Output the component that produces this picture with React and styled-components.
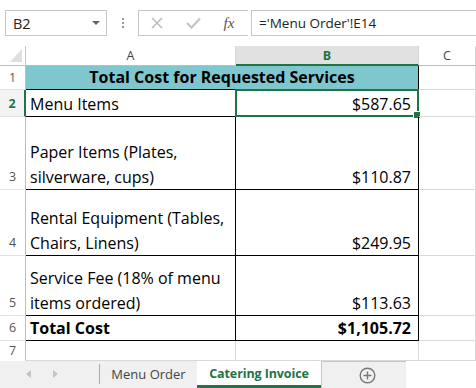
import React from "react";
import styled, { createGlobalStyle, css } from "styled-components";

const GREEN = "#217346";
const GRID = "#d9d9d9";
const FONT = `"Open Sans", "Liberation Sans", sans-serif`;

const GlobalStyle = createGlobalStyle`
  html, body { margin: 0; padding: 0; background: #fff; }
  body { font-family: ${FONT}; width: 476px; height: 388px; overflow: hidden; }
  * { box-sizing: border-box; }
`;

const Page = styled.div`
  width: 476px;
  height: 388px;
  display: flex;
  flex-direction: column;
  overflow: hidden;
`;

/* ---------- formula bar ---------- */
const FormulaBar = styled.div`
  height: 46px;
  display: flex;
  align-items: flex-start;
  padding: 10px 0 0 5px;
`;
const NameBox = styled.div`
  width: 102px;
  height: 26px;
  border: 1px solid #c6c6c6;
  display: flex;
  align-items: center;
  justify-content: space-between;
  padding: 0 6px 0 7px;
  font-size: 14.5px;
  color: #222;
`;
const Caret = styled.span`
  width: 0;
  height: 0;
  border-left: 4px solid transparent;
  border-right: 4px solid transparent;
  border-top: 4px solid #666;
`;
const Dots = styled.div`
  width: 31px;
  height: 26px;
  display: flex;
  flex-direction: column;
  align-items: center;
  justify-content: center;
  gap: 2px;
  & > span { width: 2px; height: 2px; background: #9a9a9a; }
`;
const FxBox = styled.div`
  height: 26px;
  width: 110px;
  border: 1px solid #c6c6c6;
  border-right: none;
  display: flex;
  align-items: center;
`;
const FxIcon = styled.div`
  width: ${(p) => p.$w}px;
  display: flex;
  justify-content: center;
  align-items: center;
  color: #777;
`;
const FxText = styled.span`
  font-family: "Liberation Serif", serif;
  font-style: italic;
  font-size: 15px;
  color: #555;
`;
const FormulaInput = styled.div`
  flex: 1;
  height: 26px;
  margin-left: 3px;
  border: 1px solid #c6c6c6;
  border-right: none;
  display: flex;
  align-items: center;
  padding-left: 7px;
  font-size: 13.5px;
  color: #222;
`;

/* ---------- sheet ---------- */
const Sheet = styled.div`
  display: grid;
  grid-template-columns: 26px 210px 183px 1fr;
  grid-template-rows: 20px 24px 27px 73px 66px 60px 25px 20px;
`;
const Corner = styled.div`
  border-right: 1px solid #c6c6c6;
  border-bottom: 1px solid #bdbdbd;
  position: relative;
  &::after {
    content: "";
    position: absolute;
    right: 3px;
    bottom: 3px;
    width: 0;
    height: 0;
    border-left: 12px solid transparent;
    border-bottom: 13px solid #dfdfdf;
  }
`;
const ColHeader = styled.div`
  display: flex;
  align-items: center;
  justify-content: center;
  font-size: 12.5px;
  color: #444;
  border-right: 1px solid #d4d4d4;
  border-bottom: 1px solid #bdbdbd;
  ${(p) =>
    p.$selected &&
    css`
      background: #e1e1e1;
      color: ${GREEN};
      font-weight: 700;
      border-bottom: 2px solid ${GREEN};
      padding-top: 1px;
    `}
`;
const RowHeader = styled.div`
  display: flex;
  align-items: flex-end;
  justify-content: center;
  padding-bottom: ${(p) => p.$pb ?? 4}px;
  font-size: 12.5px;
  color: #555;
  border-right: 1px solid #bdbdbd;
  border-bottom: 1px solid ${(p) => (p.$last ? "transparent" : "#e1e1e1")};
  ${(p) =>
    p.$selected &&
    css`
      color: ${GREEN};
      font-weight: 700;
      border-right: 2px solid ${GREEN};
      background: #f3f3f3;
    `}
`;
const Cell = styled.div`
  position: relative;
  display: flex;
  align-items: flex-end;
  justify-content: ${(p) => (p.$align === "right" ? "flex-end" : p.$align === "center" ? "center" : "flex-start")};
  padding: 0 ${(p) => (p.$align === "right" ? "7px" : "4px")} 0 4px;
  font-size: 16px;
  line-height: 24.5px;
  color: #000;
  white-space: pre-line;
  font-weight: ${(p) => (p.$bold ? 700 : 400)};
  border-right: 1px solid ${(p) => (p.$boxed ? "#000" : GRID)};
  border-bottom: 1px solid ${(p) => (p.$boxed ? "#000" : GRID)};
  ${(p) => p.$fill && css`background: #7fc7cf;`}
  ${(p) => p.$span && css`grid-column: span ${p.$span};`}
`;
const Selection = styled.div`
  position: absolute;
  left: -1px;
  top: -1px;
  right: -1px;
  bottom: -1px;
  border: 2px solid ${GREEN};
  pointer-events: none;
  &::after {
    content: "";
    position: absolute;
    right: -4px;
    bottom: -4px;
    width: 6px;
    height: 6px;
    background: ${GREEN};
    border: 1px solid #fff;
  }
`;

/* ---------- tabs ---------- */
const TabBar = styled.div`
  height: 27px;
  display: flex;
  align-items: stretch;
`;
const TabStrip = styled.div`
  width: 406px;
  display: flex;
  align-items: stretch;
  background: #f0f0f0;
`;
const NavArrows = styled.div`
  width: 100px;
  display: flex;
  align-items: center;
  padding-left: 26px;
  gap: 22px;
  border-right: 1px solid #ababab;
  margin: 3px 0 4px;
`;
const Arrow = styled.span`
  width: 0;
  height: 0;
  border-top: 4px solid transparent;
  border-bottom: 4px solid transparent;
  ${(p) => (p.$dir === "left" ? `border-right: 5px solid #c4c4c4;` : `border-left: 5px solid #c4c4c4;`)}
`;
const Tab = styled.div`
  display: flex;
  align-items: center;
  justify-content: center;
  width: ${(p) => p.$w}px;
  font-size: 13px;
  color: #444;
  padding-bottom: 2px;
  ${(p) =>
    p.$active &&
    css`
      background: #fff;
      color: ${GREEN};
      font-weight: 700;
      font-size: 12.5px;
      letter-spacing: -0.1px;
      border-bottom: 3px solid ${GREEN};
      padding-bottom: 0;
      padding-top: 1px;
    `}
`;
const AddArea = styled.div`
  flex: 1;
  display: flex;
  align-items: center;
  padding-left: 37px;
  border-top: 1px solid #c6c6c6;
  border-left: 1px solid #c6c6c6;
`;

const rows = [
  { n: 2, a: "Menu Items", b: "$587.65", sel: true },
  { n: 3, a: "Paper Items (Plates,\nsilverware, cups)", b: "$110.87" },
  { n: 4, a: "Rental Equipment (Tables,\nChairs, Linens)", b: "$249.95" },
  { n: 5, a: "Service Fee (18% of menu\nitems ordered)", b: "$113.63" },
  { n: 6, a: "Total Cost", b: "$1,105.72", bold: true },
];

export default function App() {
  return (
    <Page>
      <GlobalStyle />
      <FormulaBar>
        <NameBox>
          B2
          <Caret />
        </NameBox>
        <Dots>
          <span />
          <span />
          <span />
        </Dots>
        <FxBox>
          <FxIcon $w={36}>
            <svg width="12" height="12" viewBox="0 0 12 12">
              <path d="M1 1 L11 11 M11 1 L1 11" stroke="#bdbdbd" strokeWidth="1.6" fill="none" />
            </svg>
          </FxIcon>
          <FxIcon $w={36}>
            <svg width="15" height="12" viewBox="0 0 15 12">
              <path d="M1 6 L5.5 10.5 L14 1.5" stroke="#c4c4c4" strokeWidth="2.2" fill="none" />
            </svg>
          </FxIcon>
          <FxIcon $w={36}>
            <FxText>fx</FxText>
          </FxIcon>
        </FxBox>
        <FormulaInput>='Menu Order'!E14</FormulaInput>
      </FormulaBar>

      <Sheet>
        <Corner />
        <ColHeader>A</ColHeader>
        <ColHeader $selected>B</ColHeader>
        <ColHeader>C</ColHeader>

        <RowHeader $pb={3}>1</RowHeader>
        <Cell $span={2} $boxed $fill $bold $align="center">
          Total Cost for Requested Services
        </Cell>
        <Cell />

        {rows.map((r) => (
          <React.Fragment key={r.n}>
            <RowHeader $selected={r.sel}>{r.n}</RowHeader>
            <Cell $boxed $bold={r.bold}>
              {r.a}
            </Cell>
            <Cell $boxed $bold={r.bold} $align="right">
              {r.b}
              {r.sel && <Selection />}
            </Cell>
            <Cell />
          </React.Fragment>
        ))}

        <RowHeader $last $pb={1}>7</RowHeader>
        <Cell />
        <Cell />
        <Cell />
      </Sheet>

      <TabBar>
        <TabStrip>
          <NavArrows>
            <Arrow $dir="left" />
            <Arrow $dir="right" />
          </NavArrows>
          <Tab $w={97}>Menu Order</Tab>
          <Tab $w={124} $active>
            Catering Invoice
          </Tab>
          <AddArea>
            <svg width="17" height="17" viewBox="0 0 17 17">
              <circle cx="8.5" cy="8.5" r="7.3" stroke="#777" strokeWidth="1.4" fill="none" />
              <path d="M8.5 4.5 V12.5 M4.5 8.5 H12.5" stroke="#777" strokeWidth="1.4" />
            </svg>
          </AddArea>
        </TabStrip>
      </TabBar>
    </Page>
  );
}
